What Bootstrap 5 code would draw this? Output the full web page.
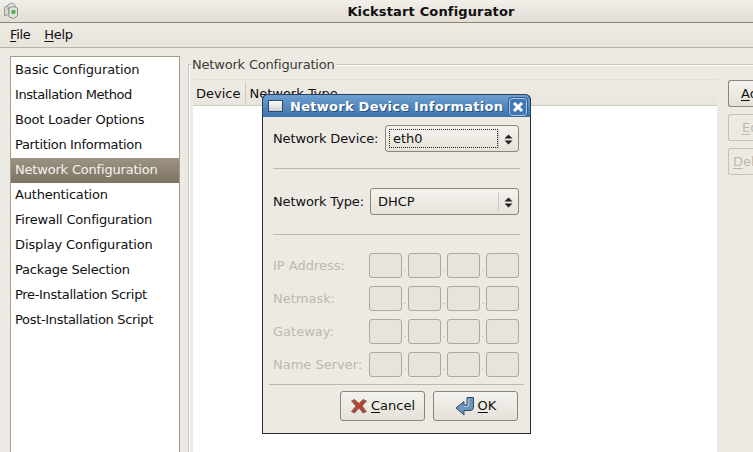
<!doctype html>
<html lang="en">
<head>
<meta charset="utf-8">
<title>Kickstart Configurator</title>
<link href="https://cdn.jsdelivr.net/npm/bootstrap@5.3.0/dist/css/bootstrap.min.css" rel="stylesheet">
<style>
html,body{height:452px;overflow:hidden}
body{width:753px;background:#edeae4;font:13px/16px "DejaVu Sans",sans-serif;color:#101010;position:relative}
.ks-title{height:23px;background:linear-gradient(#f2efea,#e2ddd4);border-bottom:1px solid #8d8576;font-weight:700;letter-spacing:.15px}
.ks-title svg{margin:2px 0 0 3px}
.ks-title span{position:absolute;left:0;width:862px;text-align:center;top:4px}
.ks-menu{height:25px;background:linear-gradient(#eeebe5,#e8e4dd);border-bottom:1px solid #b8b2a6;padding:0 0 0 10px;gap:14px;letter-spacing:-.35px}
.ks-body{height:404px;padding:8px 0 0 10px;gap:8px}
.ks-list{width:170px;height:410px;background:#fff;border:1px solid #a69d8c;padding-top:1px;flex:none}
.ks-item{height:25px;padding:4px 0 0 4px;white-space:nowrap}
.ks-ls1{letter-spacing:-.12px}
.ks-ls2{letter-spacing:-.19px}
.ks-ls3{letter-spacing:-.32px}
.ks-ls4{letter-spacing:-.42px}
.ks-item-on{background:linear-gradient(#9c9383,#7d7464);color:#f4f2ee}
.ks-frame{flex:1 0 auto;margin-top:8px;height:400px;border:1px solid #c9c4ba;border-right:0;box-shadow:inset 1px 1px 0 #fff;position:relative;padding:14px 0 0 4px}
.ks-frame-label{position:absolute;left:2px;top:-8px;background:#edeae4;padding:0 1px;line-height:15px;color:#3d3a35;letter-spacing:-.19px}
.ks-table{width:524px;flex:none}
.ks-head{height:27px;border-top:1px solid #e3dfd8;background:linear-gradient(#eeebe5,#e9e5de);border-bottom:1px solid #cfcabf}
.ks-head div{padding:5px 5px 0 3px;border-right:1px solid #cfcabf;height:22px;margin-top:2px;line-height:14px;white-space:nowrap}
.ks-white{background:#fff;height:360px}
.ks-side{margin:1px 0 0 11px;gap:7px;width:60px}
.ks-sb{height:27px;width:60px;border:1px solid #8d8576;border-right:0;border-radius:3px 0 0 3px;background:linear-gradient(#f4f2ee,#e5e1d9);padding:5px 0 0 12px;line-height:16px;overflow:hidden;white-space:nowrap}
.ks-sb-off{border-color:#c6c1b6;color:#bdb8ae;background:#edeae4;padding-left:13px}
.ks-sb-del{padding-left:4px}
.ks-dlg{position:absolute;left:262px;top:94px;width:269px;height:340px;background:#edeae4;border:1px solid #2e2c28;border-top:0;border-radius:6px 6px 0 0}
.ks-dlg-bar{height:23px;margin:0 -1px;border-radius:6px 6px 0 0;border:1px solid #2a3f5c;border-bottom:0;background:linear-gradient(#6e9fd0,#3a74ad);color:#fff;font-weight:700;padding:0 3px 0 5px;line-height:24px;letter-spacing:.27px}
.ks-dlg-bar span{flex:1;padding-left:7px;white-space:nowrap;text-shadow:1px 1px 0 #2a4f7c}
.ks-close{width:18px;height:18px;border:1px solid #a9c6e4;border-radius:3px;background:#3f78b4;margin-top:3px;box-shadow:0 0 0 1px #2f5f94}
.ks-dlg-body{padding:8px 10px 0 10px;letter-spacing:-.13px}
.ks-row{height:27px}
.ks-combo{height:27px;border:1px solid #8d8576;border-radius:3px;background:linear-gradient(#f5f3ef,#e6e2da);position:relative;line-height:25px;flex:none;margin-right:1px;letter-spacing:0}
.ks-combo-d{width:134px;margin-left:auto;padding-left:7px}
.ks-combo-t{width:149px;margin-left:auto;padding-left:7px}
.ks-focus{position:absolute;left:3px;top:3px;bottom:3px;right:20px;border:1px dotted #222}
.ks-arrow{position:absolute;right:0;top:3px;bottom:3px;width:20px;border-left:1px solid #cfcabf}
.ks-arrow svg{display:block;margin-top:1px}
.ks-sep{height:1px;background:#bdb8ad}
.ks-ip{height:25px;margin-bottom:8px;color:#bdb8ae;letter-spacing:0}
.ks-ip label{width:96px;line-height:25px;flex:none;white-space:nowrap;margin:0}
.ks-oct{width:33px;height:25px;border:1px solid #b0a794;border-radius:3px;background:#e7e4de;flex:none}
.ks-dot{width:6px;text-align:center;font-size:9px;line-height:30px;color:#b0a794}
.ks-foot{margin:0 -4px}
.ks-actions{padding-right:6px}
.ks-btn{height:30px;width:85px;border:1px solid #8d8576;border-radius:3px;background:linear-gradient(#f4f2ee,#e5e1d9);gap:3px;color:#101010;letter-spacing:0}
.ks-s1{margin:16px 0 19px}
.ks-s2{margin:19px 0 18px}
.ks-s3{margin:-1px 0 6px}
u{text-underline-offset:2px}
</style>
</head>
<body>
<div class="ks-title d-flex">
  <svg width="16" height="19" viewBox="0 0 16 19"><path d="M1.500 5 6 3v9l-4.500 2z" fill="#d9dad4" stroke="#8b938b" stroke-width=".9"/><path d="M5 3l4-2 3 2v4h-7z" fill="#e6e7e1" stroke="#8b938b" stroke-width=".9"/><path d="M6 6l4-1.500 4.500 1.500v8l-4 2.500L6 15z" fill="#dfe3dc" stroke="#7f8a80" stroke-width=".9"/><circle cx="10.500" cy="10" r="2.300" fill="#58ad58"/></svg>
  <span>Kickstart Configurator</span>
</div>
<div class="ks-menu d-flex align-items-center"><div><u>F</u>ile</div><div><u>H</u>elp</div></div>
<div class="ks-body d-flex">
  <div class="ks-list">
    <div class="ks-item ks-ls1">Basic Configuration</div>
    <div class="ks-item ks-ls4">Installation Method</div>
    <div class="ks-item ks-ls2">Boot Loader Options</div>
    <div class="ks-item ks-ls3">Partition Information</div>
    <div class="ks-item ks-item-on ks-ls2">Network Configuration</div>
    <div class="ks-item ks-ls2">Authentication</div>
    <div class="ks-item ks-ls2">Firewall Configuration</div>
    <div class="ks-item ks-ls1">Display Configuration</div>
    <div class="ks-item ks-ls2">Package Selection</div>
    <div class="ks-item ks-ls3">Pre-Installation Script</div>
    <div class="ks-item ks-ls3">Post-Installation Script</div>
  </div>
  <div class="ks-frame d-flex">
    <div class="ks-frame-label">Network Configuration</div>
    <div class="ks-table">
      <div class="ks-head d-flex"><div>Device</div><div class="flex-fill border-0">Network Type</div></div>
      <div class="ks-white"></div>
    </div>
    <div class="ks-side d-flex flex-column">
      <div class="ks-sb"><u>A</u>dd</div>
      <div class="ks-sb ks-sb-off"><u>E</u>dit</div>
      <div class="ks-sb ks-sb-off ks-sb-del"><u>D</u>elete</div>
    </div>
  </div>
</div>
<div class="ks-dlg">
  <div class="ks-dlg-bar d-flex">
    <svg class="mt-1" width="15" height="14" viewBox="0 0 15 14"><defs><linearGradient id="ksw" x1="0" y1="0" x2="0" y2="1"><stop offset="0" stop-color="#fff"/><stop offset="1" stop-color="#c9ccd0"/></linearGradient></defs><rect x=".5" y="1.500" width="14" height="11" fill="url(#ksw)" stroke="#2b4a6e"/></svg>
    <span>Network Device Information</span>
    <div class="ks-close d-flex align-items-center justify-content-center"><svg width="12" height="12" viewBox="0 0 12 12"><path d="M2 2l8 8M10 2l-8 8" stroke="#fff" stroke-width="3"/></svg></div>
  </div>
  <div class="ks-dlg-body">
    <div class="ks-row d-flex align-items-center">Network Device:
      <div class="ks-combo ks-combo-d"><div class="ks-focus"></div>eth0<div class="ks-arrow"><svg width="19" height="19" viewBox="0 0 19 19"><path d="M5.500 8.500l4-4 4 4zM5.500 10.500l4 4 4-4z" fill="#222"/></svg></div></div>
    </div>
    <div class="ks-sep ks-s1"></div>
    <div class="ks-row d-flex align-items-center">Network Type:
      <div class="ks-combo ks-combo-t">DHCP<div class="ks-arrow"><svg width="19" height="19" viewBox="0 0 19 19"><path d="M5.500 8.500l4-4 4 4zM5.500 10.500l4 4 4-4z" fill="#222"/></svg></div></div>
    </div>
    <div class="ks-sep ks-s2"></div>
    <div class="ks-ip d-flex"><label>IP Address:</label><div class="ks-oct"></div><div class="ks-dot">.</div><div class="ks-oct"></div><div class="ks-dot">.</div><div class="ks-oct"></div><div class="ks-dot">.</div><div class="ks-oct"></div></div>
    <div class="ks-ip d-flex"><label>Netmask:</label><div class="ks-oct"></div><div class="ks-dot">.</div><div class="ks-oct"></div><div class="ks-dot">.</div><div class="ks-oct"></div><div class="ks-dot">.</div><div class="ks-oct"></div></div>
    <div class="ks-ip d-flex"><label>Gateway:</label><div class="ks-oct"></div><div class="ks-dot">.</div><div class="ks-oct"></div><div class="ks-dot">.</div><div class="ks-oct"></div><div class="ks-dot">.</div><div class="ks-oct"></div></div>
    <div class="ks-ip d-flex"><label>Name Server:</label><div class="ks-oct"></div><div class="ks-dot">.</div><div class="ks-oct"></div><div class="ks-dot">.</div><div class="ks-oct"></div><div class="ks-dot">.</div><div class="ks-oct"></div></div>
    <div class="ks-foot">
      <div class="ks-sep ks-s3"></div>
      <div class="ks-actions d-flex justify-content-end gap-2">
        <div class="ks-btn d-flex align-items-center justify-content-center"><svg width="18" height="18" viewBox="0 0 18 18"><path d="M1.500 4l3-1.500L9 6.500l4-4 3.500 1.500-4.500 5 4.500 5.500-3.500 1.500L9 11l-4.500 5-3-1.500L6 9z" fill="#b8432c" stroke="#7d6a62" stroke-width="1"/></svg><span><u>C</u>ancel</span></div>
        <div class="ks-btn d-flex align-items-center justify-content-center"><svg width="20" height="20" viewBox="0 0 20 20"><path d="M1 12l8-6.500V9h3V1.500h6.500V11q0 3.500-3.500 3.500H9V19z" fill="#6f95bd" stroke="#2f4a68" stroke-width="1"/><path d="M13.500 3v7M9 10.500h4" stroke="#a9c4de" stroke-width="1.200" fill="none"/></svg><span><u>O</u>K</span></div>
      </div>
    </div>
  </div>
</div>
</body>
</html>
